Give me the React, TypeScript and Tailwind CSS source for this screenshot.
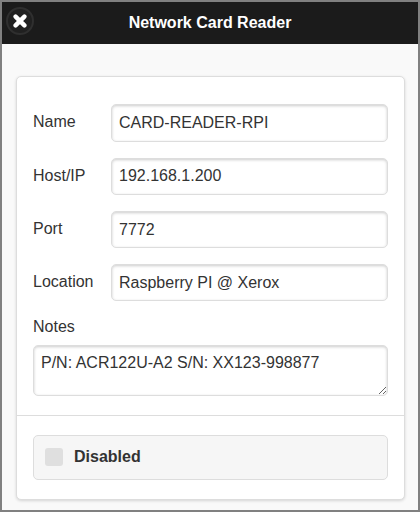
import React from "react";

const font = "[font-family:'Liberation_Sans',Arial,sans-serif]";

const Field = ({ label, value }: { label: string; value: string }) => (
  <div className="flex items-start mb-[16.15px]">
    <label className="w-[78px] mt-[6px] text-[16px] leading-[24px] text-[#333]">{label}</label>
    <input
      readOnly
      value={value}
      className="w-[277px] h-[37.15px] px-[7px] text-[16px] text-[#333] bg-white border border-[#ddd] rounded-[5px] shadow-[inset_0_1px_3px_rgba(0,0,0,0.2)] outline-none"
    />
  </div>
);

export default function App() {
  return (
    <div className={`${font} w-[420px] h-[512px] border-2 border-[#808080] bg-[#f9f9f9] flex flex-col overflow-hidden`}>
      <header className="relative h-[42px] bg-[#1b1b1b] flex items-center justify-center shrink-0">
        <div className="absolute left-[4px] top-[5px] w-[28px] h-[28px] rounded-full bg-[#202020] border-2 border-[#2f2f2f] flex items-center justify-center">
          <svg width="14" height="14" viewBox="0 0 14 14">
            <path d="M2.6 2.6 L11.4 11.4 M11.4 2.6 L2.6 11.4" stroke="#fff" strokeWidth="4.4" strokeLinecap="round" />
          </svg>
        </div>
        <h1 className="text-[16px] font-bold text-white">Network Card Reader</h1>
      </header>
      <main className="pl-[14px] pr-[13px] pt-[32px]">
        <section className="bg-white border border-[#ddd] rounded-[5px] shadow-[0_1px_3px_rgba(0,0,0,0.15)] h-[424px]">
          <div className="px-[16px] pt-[27.4px]">
            <Field label="Name" value="CARD-READER-RPI" />
            <Field label="Host/IP" value="192.168.1.200" />
            <Field label="Port" value="7772" />
            <Field label="Location" value="Raspberry PI @ Xerox" />
            <label className="block text-[16px] leading-[18px] text-[#333] mb-[9px]">Notes</label>
            <textarea
              readOnly
              value="P/N: ACR122U-A2 S/N: XX123-998877"
              className="block w-[355px] h-[51px] px-[7px] py-[7px] text-[16px] leading-[20px] text-[#333] bg-white border border-[#ddd] rounded-[5px] shadow-[inset_0_1px_3px_rgba(0,0,0,0.2)] outline-none"
            />
          </div>
          <div className="border-t border-[#ddd] mt-[19.4px] px-[16px] pt-[19px]">
            <div className="h-[45px] flex items-center bg-[#f6f6f6] border border-[#ddd] rounded-[5px] pl-[11px]">
              <span className="w-[18px] h-[18px] rounded-[3px] bg-[#dfdfdf]" />
              <span className="ml-[11px] mb-[1px] text-[16px] font-bold text-[#333]">Disabled</span>
            </div>
          </div>
        </section>
      </main>
    </div>
  );
}
